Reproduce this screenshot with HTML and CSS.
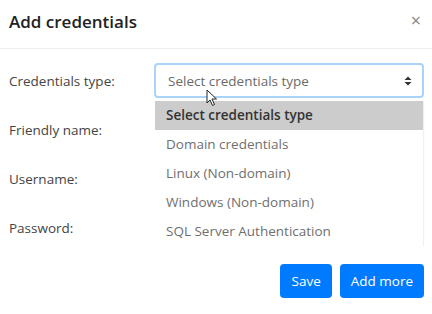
FILE: index.html
```html
<!DOCTYPE html>
<html lang="en">
<head>
    <meta charset="UTF-8">
    <title>Add credentials</title>
    <link rel="stylesheet" href="styles.css">
</head>
<body>
    <div class="modal">
        <div class="modal-header">
            <h1>Add credentials</h1>
            <span class="close">&times;</span>
        </div>

        <div class="modal-body">
            <div class="form-row">
                <label>Credentials type:</label>
                <div class="select-wrap">
                    <div class="select">
                        <span>Select credentials type</span>
                        <svg class="arrows" width="8" height="10" viewBox="0 0 8 10">
                            <path d="M4 0.5 L7.5 4 L0.5 4 Z M4 9.5 L7.5 6 L0.5 6 Z" fill="#333"/>
                        </svg>
                    </div>
                    <ul class="options">
                        <li class="active">Select credentials type</li>
                        <li>Domain credentials</li>
                        <li>Linux (Non-domain)</li>
                        <li>Windows (Non-domain)</li>
                        <li>SQL Server Authentication</li>
                    </ul>
                    <svg class="cursor" width="12" height="18" viewBox="0 0 12 18">
                        <path d="M1 1 L1 14 L4 11 L6.5 16.5 L8.5 15.5 L6 10 L10.5 10 Z" fill="#fff" stroke="#222" stroke-width="1"/>
                    </svg>
                </div>
            </div>
            <div class="form-row">
                <label>Friendly name:</label>
                <input type="text">
            </div>
            <div class="form-row">
                <label>Username:</label>
                <input type="text">
            </div>
            <div class="form-row">
                <label>Password:</label>
                <input type="password">
            </div>

            <div class="button-section">
                <button>Save</button>
                <button>Add more</button>
            </div>
        </div>
    </div>
</body>
</html>
```

FILE: styles.css
```css
body {
    margin: 0;
    padding: 0;
    background: #fff;
    font-family: "Open Sans", "Noto Sans", sans-serif;
    color: #333;
}

.modal {
    width: 432px;
    height: 314px;
    overflow: hidden;
}

.modal-header {
    height: 48px;
    display: flex;
    align-items: center;
    justify-content: space-between;
    padding: 0 11px 0 9px;
    border-bottom: 1px solid #eeeeee;
}

.modal-header h1 {
    margin: 0;
    font-size: 17px;
    font-weight: 600;
    color: #222;
    margin-top: -6px;
}

.close {
    font-size: 18px;
    color: #888;
    margin-top: -8px;
}

.modal-body {
    padding: 14px 8px 0 9px;
}

.form-row {
    display: grid;
    grid-template-columns: 145px 1fr;
    align-items: center;
    height: 35px;
    margin-bottom: 14px;
}

.form-row label {
    font-size: 13.5px;
    color: #444;
}

.form-row input {
    height: 35px;
    box-sizing: border-box;
    border: 1px solid #fff;
    outline: none;
}

.select-wrap {
    position: relative;
}

.select {
    height: 35px;
    box-sizing: border-box;
    border: 2px solid #a9d4f7;
    border-radius: 4px;
    display: flex;
    align-items: center;
    justify-content: space-between;
    padding: 0 10px 0 12px;
    font-size: 13.5px;
    color: #6b6b6b;
}

.options {
    position: absolute;
    top: 38px;
    left: 1px;
    right: 1px;
    margin: 0;
    padding: 0;
    list-style: none;
    background: #fff;
    box-shadow: 1px 0 1px rgba(0, 0, 0, 0.06);
    z-index: 2;
}

.options li {
    height: 29px;
    line-height: 29px;
    padding-left: 11px;
    font-size: 13.5px;
    color: #6f6f6f;
}

.options li.active {
    background: #cccccc;
    color: #333;
    font-weight: 600;
}

.cursor {
    position: absolute;
    left: 52px;
    top: 26px;
    z-index: 3;
}

.button-section {
    display: flex;
    justify-content: flex-end;
    gap: 8px;
    margin-top: 19px;
}

button {
    height: 34px;
    padding: 0 11px;
    border: none;
    border-radius: 4px;
    background-color: #007bff;
    color: #fff;
    font-family: "Open Sans", "Noto Sans", sans-serif;
    font-size: 13.5px;
}
```
